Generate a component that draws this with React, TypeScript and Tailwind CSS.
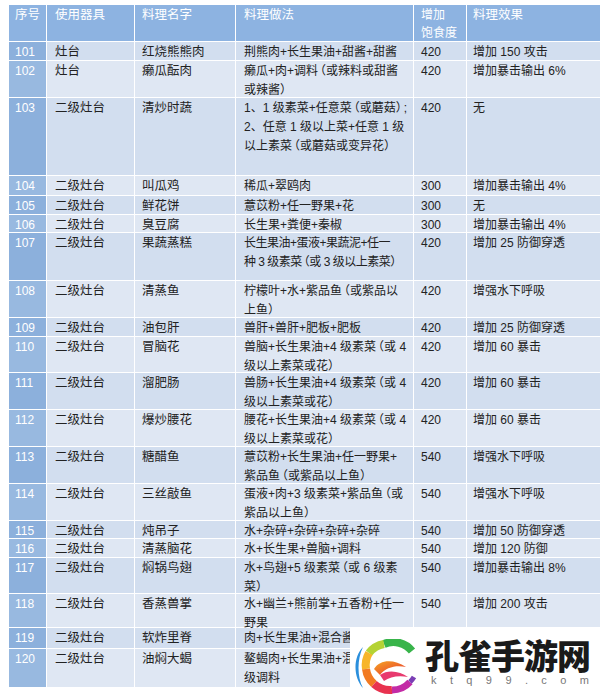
import React from "react";

type Row = {
  no: string;
  tool: string;
  name: string;
  method: string[];
  sat: string;
  eff: string;
  h: string;
  t?: string;
};

const rows: Row[] = [
  { no: "101", tool: "灶台", name: "红烧熊熊肉", method: ["荆熊肉+长生果油+甜酱+甜酱"], sat: "420", eff: "增加 150 攻击", h: "h-[19px]" },
  { no: "102", tool: "灶台", name: "癞瓜酝肉", method: ["癞瓜+肉+调料（或辣料或甜酱", "或辣酱）"], sat: "420", eff: "增加暴击输出 6%", h: "h-[37px]" },
  { no: "103", tool: "二级灶台", name: "清炒时蔬", method: ["1、1 级素菜+任意菜（或蘑菇）;", "2、任意 1 级以上菜+任意 1 级", "以上素菜（或蘑菇或变异花）"], sat: "420", eff: "无", h: "h-[78px]" },
  { no: "104", tool: "二级灶台", name: "叫瓜鸡", method: ["稀瓜+翠鸥肉"], sat: "300", eff: "增加暴击输出 4%", h: "h-[20px]" },
  { no: "105", tool: "二级灶台", name: "鲜花饼", method: ["薏苡粉+任一野果+花"], sat: "300", eff: "无", h: "h-[19px]" },
  { no: "106", tool: "二级灶台", name: "臭豆腐", method: ["长生果+粪便+秦椒"], sat: "300", eff: "增加暴击输出 4%", h: "h-[18px]" },
  { no: "107", tool: "二级灶台", name: "果蔬蒸糕", method: ["长生果油+蛋液+果蔬泥+任一", "种 3 级素菜（或 3 级以上素菜）"], sat: "420", eff: "增加 25 防御穿透", h: "h-[48px]", t: "tracking-[-0.5px]" },
  { no: "108", tool: "二级灶台", name: "清蒸鱼", method: ["柠檬叶+水+紫品鱼（或紫品以", "上鱼）"], sat: "420", eff: "增强水下呼吸", h: "h-[37px]" },
  { no: "109", tool: "二级灶台", name: "油包肝", method: ["兽肝+兽肝+肥板+肥板"], sat: "420", eff: "增加 25 防御穿透", h: "h-[19px]" },
  { no: "110", tool: "二级灶台", name: "冒脑花", method: ["兽脑+长生果油+4 级素菜（或 4", "级以上素菜或花）"], sat: "420", eff: "增加 60 暴击", h: "h-[36px]" },
  { no: "111", tool: "二级灶台", name: "溜肥肠", method: ["兽肠+长生果油+4 级素菜（或 4", "级以上素菜或花）"], sat: "420", eff: "增加 60 暴击", h: "h-[37px]" },
  { no: "112", tool: "二级灶台", name: "爆炒腰花", method: ["腰花+长生果油+4 级素菜（或 4", "级以上素菜或花）"], sat: "420", eff: "增加 60 暴击", h: "h-[37px]" },
  { no: "113", tool: "二级灶台", name: "糖醋鱼", method: ["薏苡粉+长生果油+任一野果+", "紫品鱼（或紫品以上鱼）"], sat: "540", eff: "增强水下呼吸", h: "h-[37px]" },
  { no: "114", tool: "二级灶台", name: "三丝敲鱼", method: ["蛋液+肉+3 级素菜+紫品鱼（或", "紫品以上鱼）"], sat: "540", eff: "增强水下呼吸", h: "h-[37px]" },
  { no: "115", tool: "二级灶台", name: "炖吊子", method: ["水+杂碎+杂碎+杂碎+杂碎"], sat: "540", eff: "增加 50 防御穿透", h: "h-[18px]" },
  { no: "116", tool: "二级灶台", name: "清蒸脑花", method: ["水+长生果+兽脑+调料"], sat: "540", eff: "增加 120 防御", h: "h-[19px]" },
  { no: "117", tool: "二级灶台", name: "焖锅鸟翅", method: ["水+鸟翅+5 级素菜（或 6 级素", "菜）"], sat: "540", eff: "增加暴击输出 8%", h: "h-[36px]" },
  { no: "118", tool: "二级灶台", name: "香蒸兽掌", method: ["水+幽兰+熊前掌+五香粉+任一", "野果"], sat: "540", eff: "增加 200 攻击", h: "h-[34px]" },
  { no: "119", tool: "二级灶台", name: "软炸里脊", method: ["肉+长生果油+混合酱"], sat: "", eff: "", h: "h-[21px]" },
  { no: "120", tool: "二级灶台", name: "油焖大蝎", method: ["鳌蝎肉+长生果油+混", "级调料"], sat: "", eff: "", h: "h-[39px]" },
];

function Line({ text }: { text: string }) {
  const parts = text.split(/(（|）)/);
  return (
    <div>
      {parts.map((p, i) =>
        p === "（" ? (
          <span key={i} className="ml-[-4px]">（</span>
        ) : p === "）" ? (
          <span key={i} className="mr-[-4px]">）</span>
        ) : (
          <span key={i}>{p}</span>
        )
      )}
    </div>
  );
}

function Logo() {
  return (
    <svg width="68" height="56" viewBox="0 0 68 56">
      <defs>
        <linearGradient id="g1" x1="0" y1="0" x2="1" y2="1">
          <stop offset="0" stopColor="#f5a623" />
          <stop offset="1" stopColor="#e8312f" />
        </linearGradient>
      </defs>
      <path d="M9 8 C-1 18 -1 38 9 49 C3 38 3 20 9 8 Z" fill="#2b8fdc" />
      <path d="M58 12 A24 24 0 0 0 30 5" stroke="#38b44a" strokeWidth="8" fill="none" />
      <path d="M30 5 A24 24 0 0 0 15 14" stroke="#b5d334" strokeWidth="8" fill="none" />
      <path d="M15 14 A24 24 0 0 0 12 30" stroke="#f7b52a" strokeWidth="8" fill="none" />
      <path d="M12 30 A24 24 0 0 0 20 45" stroke="#f27a22" strokeWidth="8" fill="none" />
      <path d="M20 45 A24 24 0 0 0 38 51" stroke="#e8334f" strokeWidth="8" fill="none" />
      <path d="M38 51 A24 24 0 0 0 56 43" stroke="#c32ba6" strokeWidth="7" fill="none" />
      <path d="M56 43 A24 24 0 0 0 60 38" stroke="#7b3fb5" strokeWidth="5" fill="none" />
      <path d="M20 30 C26 20 40 20 52 28 C42 26 32 28 26 36 C24 34 22 32 20 30 Z" fill="url(#g1)" />
      <path d="M26 36 C34 30 46 32 54 38 C44 36 36 38 30 42 Z" fill="#e83a6e" />
    </svg>
  );
}

export default function App() {
  const font = { fontFamily: '"Liberation Sans", "Noto Sans CJK SC", sans-serif' };
  return (
    <div className="relative w-[600px] h-[695px] bg-white overflow-hidden" style={font}>
      <div className="pt-[5px] pl-[9px]">
        <div className="flex h-[37px] bg-[#8db3e1] text-white text-[12.5px] leading-[18px] border-b border-white">
          <div className="w-[38px] border-r border-white pl-[6px] pt-[1px]">序号</div>
          <div className="w-[88px] border-r border-white pl-[8px] pt-[1px]">使用器具</div>
          <div className="w-[101px] border-r border-white pl-[7px] pt-[1px]">料理名字</div>
          <div className="w-[178px] border-r border-white pl-[8px] pt-[1px]">料理做法</div>
          <div className="w-[53px] border-r border-white pl-[7px] pt-[1px] text-[12px]">
            <div>增加</div>
            <div>饱食度</div>
          </div>
          <div className="w-[123px] pl-[6px] pt-[1px]">料理效果</div>
        </div>
        {rows.map((r, i) => (
          <div
            key={r.no}
            className={`flex ${r.h} leading-[19px] text-[#222222] border-b border-white ${
              i % 2 === 0 ? "bg-[#d2deef]" : "bg-[#dfe7f3]"
            }`}
          >
            <div
              className={`w-[38px] border-r border-white pl-[6px] pt-[1px] text-[12px] text-white ${
                i % 2 === 0 ? "bg-[#8cb0dc]" : "bg-[#98b9e0]"
              }`}
            >
              {r.no}
            </div>
            <div className="w-[88px] border-r border-white pl-[8px] pt-[1px] text-[12.5px] whitespace-nowrap">{r.tool}</div>
            <div className="w-[101px] border-r border-white pl-[7px] pt-[1px] text-[12.5px] whitespace-nowrap">{r.name}</div>
            <div className={`w-[178px] border-r border-white pl-[8px] pt-[1px] text-[12px] whitespace-nowrap ${r.t ?? ""}`}>
              {r.method.map((m) => (
                <Line key={m} text={m} />
              ))}
            </div>
            <div className="w-[53px] border-r border-white pl-[7px] pt-[1px] text-[12px]">{r.sat}</div>
            <div className="w-[123px] pl-[6px] pt-[1px] text-[12px] whitespace-nowrap">{r.eff}</div>
          </div>
        ))}
      </div>

      <div className="absolute left-[350px] top-[628px] w-[250px] h-[67px] bg-white flex items-start">
        <div className="mt-[11px] ml-[4px]">
          <Logo />
        </div>
        <div className="flex flex-col ml-[3px] mt-[8px]">
          <div
            className="text-[34px] leading-[38px] font-black text-[#1a1a1a] tracking-[-1px] whitespace-nowrap"
            style={{ fontFamily: '"Noto Sans CJK SC", sans-serif' }}
          >
            孔雀手游网
          </div>
          <div className="flex justify-between w-[158px] ml-[6px] text-[11px] leading-[12px] text-[#777]">
            <span>k</span>
            <span>t</span>
            <span>q</span>
            <span>9</span>
            <span>9</span>
            <span>.</span>
            <span>c</span>
            <span>o</span>
            <span>m</span>
          </div>
        </div>
      </div>
    </div>
  );
}
